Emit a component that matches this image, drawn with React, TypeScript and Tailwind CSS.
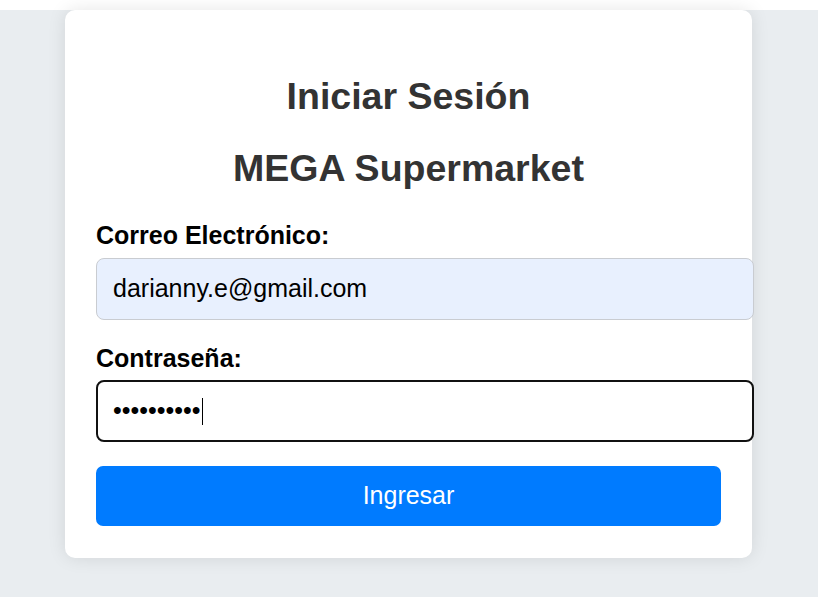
import React from "react";

const font = { fontFamily: '"Liberation Sans", Arial, sans-serif' };

const LoginCard = () => {
  return (
    <div className="relative w-[687px] h-[548px] bg-white rounded-[10px] shadow-[0_0_18px_rgba(0,0,0,0.10)] px-[31px] pt-[66px]">
      <h1 className="text-center text-[37.5px] leading-[40px] font-bold text-[#333]">
        Iniciar Sesión
      </h1>
      <h2 className="mt-[32px] text-center text-[37.5px] leading-[40px] font-bold text-[#333]">
        MEGA Supermarket
      </h2>

      <div className="mt-[33px]">
        <label className="block text-[25px] leading-[28px] font-bold text-black">
          Correo Electrónico:
        </label>
        <div className="mt-[9px] w-[658px] h-[62px] flex items-center px-[16px] bg-[#e8f0fe] border border-[#c9ccd1] rounded-[8px] text-[25px] text-black">
          darianny.e@gmail.com
        </div>
      </div>

      <div className="mt-[24px]">
        <label className="block text-[25px] leading-[28px] font-bold text-black">
          Contraseña:
        </label>
        <div className="mt-[8px] w-[658px] h-[62px] flex items-center px-[15px] bg-white border-[2.5px] border-[#111] rounded-[8px] text-[25px] text-black">
          <span>••••••••••</span>
          <span className="ml-[1px] w-[1px] h-[27px] bg-black" />
        </div>
      </div>

      <button className="mt-[24px] w-full h-[60px] bg-[#007bff] rounded-[7px] text-white text-[25px]">
        Ingresar
      </button>
    </div>
  );
};

export default function App() {
  return (
    <div className="min-h-screen bg-white pt-[10px]" style={font}>
      <div className="h-[587px] bg-[#e9edf0] pl-[65px]">
        <LoginCard />
      </div>
    </div>
  );
}
